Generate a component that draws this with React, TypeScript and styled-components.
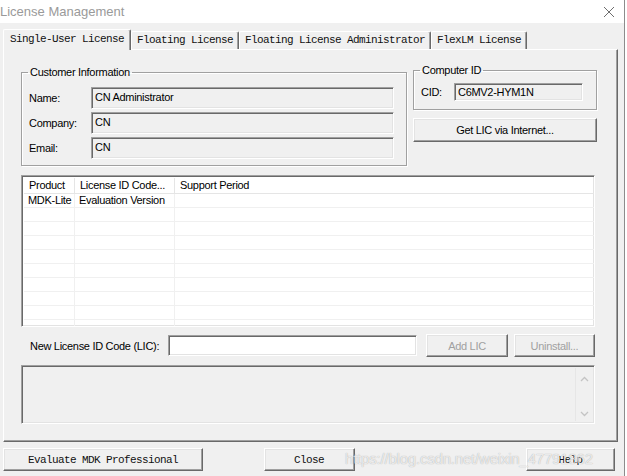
import React from "react";
import styled, { createGlobalStyle, css } from "styled-components";

const GlobalStyle = createGlobalStyle`
  html, body {
    margin: 0;
    padding: 0;
    background: #fff;
  }
  body {
    font-family: "Liberation Sans", Arial, sans-serif;
    font-size: 11px;
    letter-spacing: -0.3px;
    color: #000;
  }
  * {
    box-sizing: border-box;
  }
`;

const sunken = css`
  border-top: 1px solid #a0a0a0;
  border-left: 1px solid #a0a0a0;
  border-right: 1px solid #fff;
  border-bottom: 1px solid #fff;
  box-shadow: inset 1px 1px 0 #696969, inset -1px -1px 0 #e3e3e3;
`;

const raised = css`
  border-top: 1px solid #fff;
  border-left: 1px solid #fff;
  border-right: 1px solid #696969;
  border-bottom: 1px solid #696969;
  box-shadow: inset -1px -1px 0 #a0a0a0, inset 1px 1px 0 #e3e3e3;
`;

const mono = css`
  font-family: "Liberation Mono", "Courier New", monospace;
  font-size: 11px;
  letter-spacing: -0.6px;
  color: #111;
`;

const Window = styled.div`
  width: 625px;
  height: 476px;
  border-right: 1px solid #8c8c8c;
  display: flex;
  flex-direction: column;
`;

const TitleBar = styled.div`
  height: 23px;
  background: #fff;
  display: flex;
  align-items: center;
  justify-content: space-between;
  padding: 0 9px 0 0;
`;

const Title = styled.span`
  font-size: 13px;
  letter-spacing: 0;
  color: #9a9a9a;
`;

const Body = styled.div`
  flex: 1;
  background: #f0f0f0;
  padding: 6px 0 0 3px;
`;

const TabStrip = styled.div`
  display: flex;
  align-items: flex-end;
  height: 20px;
  position: relative;
  z-index: 2;
`;

const Tab = styled.div<{ $active?: boolean }>`
  ${mono};
  height: ${(p) => (p.$active ? 21 : 18)}px;
  margin-bottom: ${(p) => (p.$active ? -1 : 0)}px;
  padding: ${(p) => (p.$active ? "2px 6px 0" : "1px 5px 0")};
  background: #f0f0f0;
  border-top: 1px solid #fff;
  border-left: 1px solid #fff;
  border-right: 1px solid #696969;
  border-radius: 2px 2px 0 0;
  box-shadow: inset -1px 0 0 #a0a0a0;
  white-space: nowrap;
  line-height: 14px;
`;

const Panel = styled.div`
  width: 615px;
  height: 393px;
  padding: 16px 19px 0 17px;
  border-top: 1px solid #fff;
  border-left: 1px solid #fff;
  border-right: 1px solid #696969;
  border-bottom: 1px solid #696969;
  box-shadow: inset -1px -1px 0 #a0a0a0;
  position: relative;
  z-index: 1;
`;

const TopRow = styled.div`
  display: flex;
  gap: 6px;
  align-items: flex-start;
`;

const Group = styled.fieldset<{ $w: number; $h: number }>`
  width: ${(p) => p.$w}px;
  height: ${(p) => p.$h}px;
  margin: 0;
  padding: 0 12px 0 7px;
  border: 1px solid #a0a0a0;
  box-shadow: 1px 1px 0 #fff, inset 1px 1px 0 #fff;
  border-radius: 0;
`;

const Legend = styled.legend`
  padding: 0 2px;
  margin-left: -1px;
  font-size: 11px;
  line-height: 13px;
`;

const InfoGrid = styled.div`
  display: grid;
  grid-template-columns: 62px 303px;
  grid-auto-rows: 22px;
  row-gap: 3px;
  margin-top: 8px;
  align-items: center;
`;

const FieldLabel = styled.span`
  font-size: 11px;
`;

const Field = styled.div<{ $h?: number }>`
  ${sunken};
  height: ${(p) => p.$h ?? 22}px;
  background: #f0f0f0;
  padding: 0 3px;
  display: flex;
  align-items: ${(p) => (p.$h ? "center" : "flex-start")};
  padding-top: ${(p) => (p.$h ? 0 : 3)}px;
  font-size: 11px;
`;

const RightCol = styled.div`
  display: flex;
  flex-direction: column;
  gap: 8px;
  width: 184px;
  margin-top: -2px;
`;

const CidRow = styled.div`
  display: flex;
  align-items: center;
  margin-top: 6px;
`;

const CidLabel = styled.span`
  width: 33px;
  font-size: 11px;
`;

const Button = styled.button<{ $w?: number; $h?: number; $mono?: boolean }>`
  ${raised};
  width: ${(p) => (p.$w ? `${p.$w}px` : "100%")};
  height: ${(p) => p.$h ?? 24}px;
  background: #f0f0f0;
  font-family: "Liberation Sans", Arial, sans-serif;
  font-size: 11px;
  letter-spacing: -0.3px;
  color: ${(p) => (p.disabled ? "#a0a0a0" : "#000")};
  padding: 0;
  margin: 0;
  ${(p) => p.$mono && mono};
`;

const ListView = styled.div`
  ${sunken};
  margin-top: 9px;
  width: 574px;
  height: 152px;
  background: #fff;
  overflow: hidden;
  padding: 2px 0 0 2px;
`;

const ListGrid = styled.div`
  display: grid;
  grid-template-columns: 51px 100px 1fr;
`;

const HeaderCell = styled.div<{ $last?: boolean }>`
  height: 16px;
  line-height: 15px;
  padding-left: 5px;
  border-right: ${(p) => (p.$last ? "none" : "1px solid #e5e5e5")};
  border-bottom: 1px solid #e5e5e5;
  white-space: nowrap;
  overflow: hidden;
`;

const Cell = styled.div<{ $last?: boolean }>`
  height: 14px;
  line-height: 13px;
  padding-left: 4px;
  border-right: ${(p) => (p.$last ? "none" : "1px solid #f0f0f0")};
  border-bottom: 1px solid #f0f0f0;
  white-space: nowrap;
  overflow: hidden;
`;

const LicRow = styled.div`
  display: flex;
  align-items: center;
  margin-top: 7px;
  width: 574px;
`;

const LicLabel = styled.span`
  padding-left: 9px;
  width: 147px;
  white-space: nowrap;
`;

const LicInput = styled.div`
  ${sunken};
  width: 249px;
  height: 21px;
  background: #fff;
  margin-right: 9px;
`;

const MsgBox = styled.div`
  ${sunken};
  margin-top: 8px;
  width: 574px;
  height: 59px;
  background: #f0f0f0;
  display: flex;
  justify-content: flex-end;
  padding: 2px;
`;

const ScrollBar = styled.div`
  width: 17px;
  border-left: 1px solid #e6e6e6;
  display: flex;
  flex-direction: column;
  justify-content: space-between;
  align-items: center;
  padding: 8px 0 4px;
`;

const BottomBar = styled.div`
  position: relative;
  display: grid;
  grid-template-columns: 1fr auto 1fr;
  align-items: center;
  width: 612px;
  margin-top: 6px;
`;

const BottomLeft = styled.div`
  justify-self: start;
`;

const BottomRight = styled.div`
  justify-self: end;
`;

const Watermark = styled.span`
  position: absolute;
  left: 342px;
  top: 2px;
  font-size: 15px;
  letter-spacing: -0.2px;
  color: rgba(255, 255, 255, 0.75);
  text-shadow: 0 0 1px rgba(0, 0, 0, 0.35);
  pointer-events: none;
  white-space: nowrap;
`;

const Chevron = ({ up }: { up?: boolean }) => (
  <svg width="9" height="6" viewBox="0 0 9 6">
    <path
      d={up ? "M1 5 L4.5 1.5 L8 5" : "M1 1 L4.5 4.5 L8 1"}
      fill="none"
      stroke="#c4c4c4"
      strokeWidth="1.3"
    />
  </svg>
);

const CloseIcon = () => (
  <svg width="12" height="12" viewBox="0 0 12 12">
    <path d="M1 1 L11 11 M11 1 L1 11" stroke="#6e6e6e" strokeWidth="1" />
  </svg>
);

const tabs = [
  "Single-User License",
  "Floating License",
  "Floating License Administrator",
  "FlexLM License",
];

const rows: string[][] = [
  ["MDK-Lite", "Evaluation Version", ""],
  ...Array.from({ length: 9 }, () => ["", "", ""]),
];

export default function App() {
  return (
    <>
      <GlobalStyle />
      <Window>
        <TitleBar>
          <Title>License Management</Title>
          <CloseIcon />
        </TitleBar>
        <Body>
          <TabStrip>
            {tabs.map((t, i) => (
              <Tab key={t} $active={i === 0}>
                {t}
              </Tab>
            ))}
          </TabStrip>
          <Panel>
            <TopRow>
              <Group $w={386} $h={100}>
                <Legend>Customer Information</Legend>
                <InfoGrid>
                  <FieldLabel>Name:</FieldLabel>
                  <Field>CN Administrator</Field>
                  <FieldLabel>Company:</FieldLabel>
                  <Field>CN</Field>
                  <FieldLabel>Email:</FieldLabel>
                  <Field>CN</Field>
                </InfoGrid>
              </Group>
              <RightCol>
                <Group $w={184} $h={46}>
                  <Legend>Computer ID</Legend>
                  <CidRow>
                    <CidLabel>CID:</CidLabel>
                    <Field $h={18} style={{ width: 129 }}>
                      C6MV2-HYM1N
                    </Field>
                  </CidRow>
                </Group>
                <Button>Get LIC via Internet...</Button>
              </RightCol>
            </TopRow>

            <ListView>
              <ListGrid>
                <HeaderCell>Product</HeaderCell>
                <HeaderCell>License ID Code...</HeaderCell>
                <HeaderCell $last>Support Period</HeaderCell>
                {rows.map((r, i) =>
                  r.map((c, j) => (
                    <Cell key={`${i}-${j}`} $last={j === 2}>
                      {c}
                    </Cell>
                  ))
                )}
              </ListGrid>
            </ListView>

            <LicRow>
              <LicLabel>New License ID Code (LIC):</LicLabel>
              <LicInput />
              <Button $w={82} $h={23} disabled>
                Add LIC
              </Button>
              <Button $w={81} $h={23} disabled style={{ marginLeft: "auto" }}>
                Uninstall...
              </Button>
            </LicRow>

            <MsgBox>
              <ScrollBar>
                <Chevron up />
                <Chevron />
              </ScrollBar>
            </MsgBox>
          </Panel>

          <BottomBar>
            <BottomLeft>
              <Button $w={200} $h={23} $mono>
                Evaluate MDK Professional
              </Button>
            </BottomLeft>
            <Button $w={91} $h={23} $mono>
              Close
            </Button>
            <BottomRight>
              <Button $w={89} $h={23} $mono>
                Help
              </Button>
            </BottomRight>
            <Watermark>https://blog.csdn.net/weixin_47791862</Watermark>
          </BottomBar>
        </Body>
      </Window>
    </>
  );
}
